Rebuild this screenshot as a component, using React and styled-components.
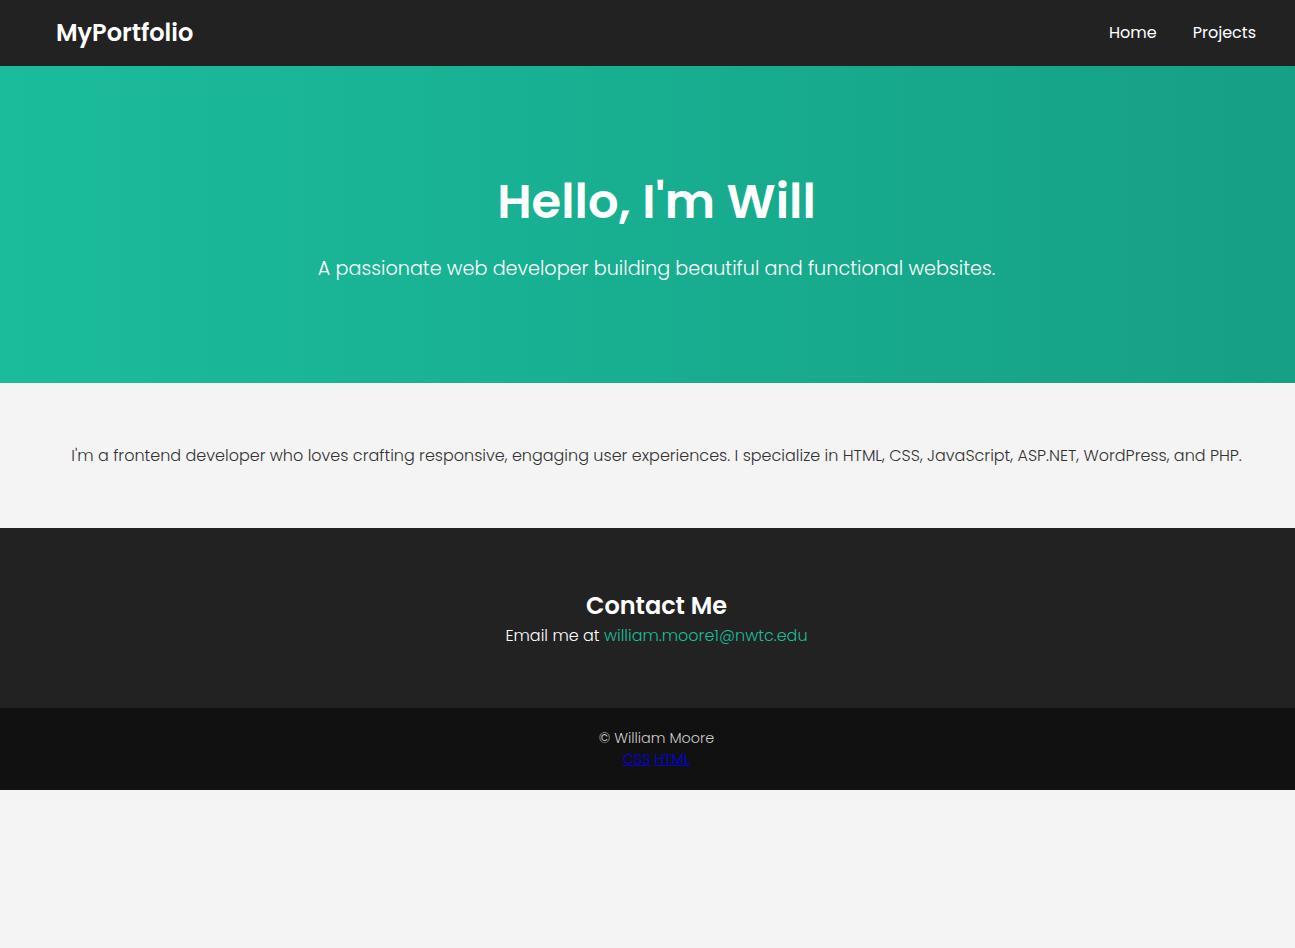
import React from 'react';
import styled, { createGlobalStyle } from 'styled-components';

const GlobalStyle = createGlobalStyle`
  * {
    box-sizing: border-box;
  }
  body {
    margin: 0;
    background: #f4f4f4;
    font-family: "Poppins", "Open Sans", "Noto Sans", sans-serif;
    color: #333;
  }
`;

const Nav = styled.header`
  display: flex;
  justify-content: space-between;
  align-items: center;
  height: 66px;
  padding: 0 39px 0 56px;
  background: #222;
`;

const Logo = styled.div`
  font-size: 24px;
  font-weight: 600;
  color: #fff;
  margin-top: -2px;
`;

const NavLinks = styled.nav`
  display: flex;
  gap: 36px;
  margin-top: -2px;
`;

const NavLink = styled.a`
  color: #fff;
  font-size: 16px;
  font-weight: 400;
  text-decoration: none;
`;

// content sits ~9px right of the viewport centre in the original
const Centered = styled.section`
  display: flex;
  flex-direction: column;
  align-items: center;
  text-align: center;
  padding-left: 18px;
`;

const Hero = styled(Centered)`
  height: 317px;
  padding-top: 106px;
  background: linear-gradient(to right, #1abc9c, #16a085);
  color: #fff;
`;

const HeroTitle = styled.h1`
  margin: 0;
  font-size: 48px;
  font-weight: 600;
  line-height: 60px;
`;

const HeroText = styled.p`
  margin: 22px 0 0;
  font-size: 19.2px;
  font-weight: 300;
`;

const About = styled(Centered)`
  justify-content: center;
  height: 145px;
  padding-right: 40px;
  padding-left: 58px;
`;

const AboutText = styled.p`
  margin: 0;
  font-size: 16px;
  font-weight: 300;
  color: #333;
`;

const Contact = styled(Centered)`
  justify-content: center;
  height: 180px;
  padding-top: 3px;
  background: #222;
  color: #fff;
`;

const ContactTitle = styled.h2`
  margin: 0 0 1px;
  font-size: 24px;
  font-weight: 600;
  line-height: 32px;
`;

const ContactText = styled.p`
  margin: 0;
  font-size: 16px;
  font-weight: 300;
  line-height: 26px;
`;

const Mail = styled.a`
  color: #1abc9c;
  text-decoration: none;
`;

const Footer = styled(Centered)`
  justify-content: center;
  height: 82px;
  background: #111;
  color: #ccc;
  font-size: 14.4px;
  font-weight: 300;
  line-height: 21px;
`;

const TechLink = styled.a`
  color: #0000ee;
`;

export default function App() {
  return (
    <>
      <GlobalStyle />
      <Nav>
        <Logo>MyPortfolio</Logo>
        <NavLinks>
          <NavLink href="#">Home</NavLink>
          <NavLink href="#">Projects</NavLink>
        </NavLinks>
      </Nav>
      <Hero>
        <HeroTitle>Hello, I'm Will</HeroTitle>
        <HeroText>A passionate web developer building beautiful and functional websites.</HeroText>
      </Hero>
      <About>
        <AboutText>
          I'm a frontend developer who loves crafting responsive, engaging user experiences. I specialize in HTML, CSS, JavaScript, ASP.NET, WordPress, and PHP.
        </AboutText>
      </About>
      <Contact>
        <ContactTitle>Contact Me</ContactTitle>
        <ContactText>
          Email me at <Mail href="#">william.moore1@nwtc.edu</Mail>
        </ContactText>
      </Contact>
      <Footer as="footer">
        <div>© William Moore</div>
        <div>
          <TechLink href="#">CSS</TechLink> <TechLink href="#">HTML</TechLink>
        </div>
      </Footer>
    </>
  );
}
